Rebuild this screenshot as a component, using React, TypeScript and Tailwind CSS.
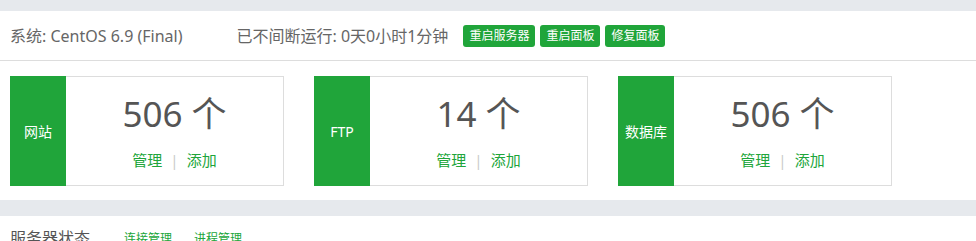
const font = { fontFamily: '"Noto Sans", "Noto Sans CJK SC", sans-serif' }

const stats = [
  { label: '网站', count: 506 },
  { label: 'FTP', count: 14 },
  { label: '数据库', count: 506 },
]

const actions = ['重启服务器', '重启面板', '修复面板']

function StatCard({ label, count }: { label: string; count: number }) {
  return (
    <div className="flex h-[110px] w-[274px] border border-[#ddd] bg-white">
      <div className="-my-px -ml-px flex w-[56px] shrink-0 items-center justify-center bg-[#20a53a] text-[14px] text-white">
        {label}
      </div>
      <div className="flex flex-1 flex-col items-center pt-[13px]">
        <div className="text-[35px] leading-[48px] text-[#555]">{count} 个</div>
        <div className="mt-[12px] flex items-center text-[15px] leading-[20px] text-[#20a53a]">
          <a>管理</a>
          <span className="mx-[8px] text-[#ccc]">|</span>
          <a>添加</a>
        </div>
      </div>
    </div>
  )
}

export default function App() {
  return (
    <div className="h-[241px] overflow-hidden bg-[#e6e9ed] pt-[11px]" style={font}>
      <div className="bg-white">
        <div className="flex h-[50px] items-center border-b border-[#ddd] px-[10px] text-[16px] text-[#666]">
          <span>系统: CentOS 6.9 (Final)</span>
          <span className="ml-[54px]">已不间断运行: 0天0小时1分钟</span>
          <div className="ml-[15px] flex gap-[5px]">
            {actions.map((a) => (
              <button
                key={a}
                className="h-[22px] rounded-[3px] bg-[#20a53a] px-[6px] text-[12px] leading-[22px] text-white"
              >
                {a}
              </button>
            ))}
          </div>
        </div>
        <div className="flex gap-[30px] px-[10px] pb-[14px] pt-[15px]">
          {stats.map((s) => (
            <StatCard key={s.label} label={s.label} count={s.count} />
          ))}
        </div>
      </div>
      <div className="mt-[16px] flex h-[60px] items-start bg-white px-[10px] pt-[10px]">
        <span className="text-[16px] leading-[24px] text-[#555]">服务器状态</span>
        <a className="ml-[34px] mt-[4px] text-[12px] leading-[18px] text-[#20a53a]">连接管理</a>
        <a className="ml-[22px] mt-[4px] text-[12px] leading-[18px] text-[#20a53a]">进程管理</a>
      </div>
    </div>
  )
}
